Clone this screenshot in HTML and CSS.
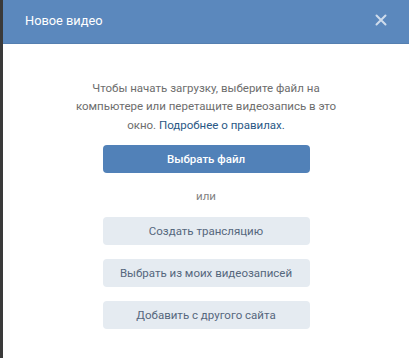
FILE: index.html
```html
<!DOCTYPE html>
<html lang="ru">
<head>
<meta charset="utf-8">
<link rel="stylesheet" href="styles.css">
</head>
<body>
<div class="page">
  <div class="backdrop"></div>
  <div class="modal">
    <div class="modal-header">
      <div class="modal-title">Новое видео</div>
      <svg class="close" width="12" height="12" viewBox="0 0 12 12"><path d="M1.5 1.5 L10.5 10.5 M10.5 1.5 L1.5 10.5" stroke="#cfdcec" stroke-width="2" stroke-linecap="round"/></svg>
    </div>
    <div class="modal-body">
      <p class="info">Чтобы начать загрузку, выберите файл на компьютере или перетащите видеозапись в это окно. <span class="link">Подробнее о правилах.</span></p>
      <div class="btn btn-primary">Выбрать файл</div>
      <div class="or">или</div>
      <div class="actions">
        <div class="btn btn-secondary">Создать трансляцию</div>
        <div class="btn btn-secondary">Выбрать из моих видеозаписей</div>
        <div class="btn btn-secondary">Добавить с другого сайта</div>
      </div>
    </div>
  </div>
</div>
</body>
</html>
```
FILE: styles.css
```css
html, body {
  margin: 0;
  padding: 0;
  height: 100%;
  overflow: hidden;
}
body {
  font-family: Roboto, "Open Sans", "Liberation Sans", sans-serif;
  background: #ffffff;
}
.page {
  display: flex;
  height: 358px;
}
.backdrop {
  width: 3px;
  flex: none;
  background: #3a3a3a;
}
.modal {
  flex: 1;
  background: #ffffff;
  display: flex;
  flex-direction: column;
}
.modal-header {
  height: 44px;
  background: #5b88bd;
  display: flex;
  align-items: center;
  justify-content: space-between;
  padding: 0 22px 0 22px;
  border-bottom: 1px solid #557fb0;
  box-sizing: border-box;
}
.modal-title {
  color: #ffffff;
  font-size: 12.8px;
  margin-top: -3px;
}
.close {
  margin-top: -3px;
  margin-right: 0;
}
.modal-body {
  display: flex;
  flex-direction: column;
  align-items: center;
  padding-top: 35px;
}
.info {
  margin: 0;
  width: 268px;
  text-align: center;
  font-size: 11.5px;
  line-height: 18.4px;
  color: #6d6d6d;
}
.link {
  color: #2a5885;
}
.btn {
  width: 207px;
  height: 28px;
  border-radius: 4px;
  display: flex;
  align-items: center;
  justify-content: center;
  font-size: 11.5px;
  box-sizing: border-box;
}
.btn-primary {
  margin-top: 11px;
  background: #5181b8;
  color: #ffffff;
  font-weight: 500;
}
.or {
  margin-top: 14px;
  font-size: 11.5px;
  color: #828282;
  line-height: 18px;
}
.actions {
  margin-top: 12px;
  display: flex;
  flex-direction: column;
  gap: 14px;
}
.btn-secondary {
  background: #e5ebf1;
  color: #55677d;
}
```
